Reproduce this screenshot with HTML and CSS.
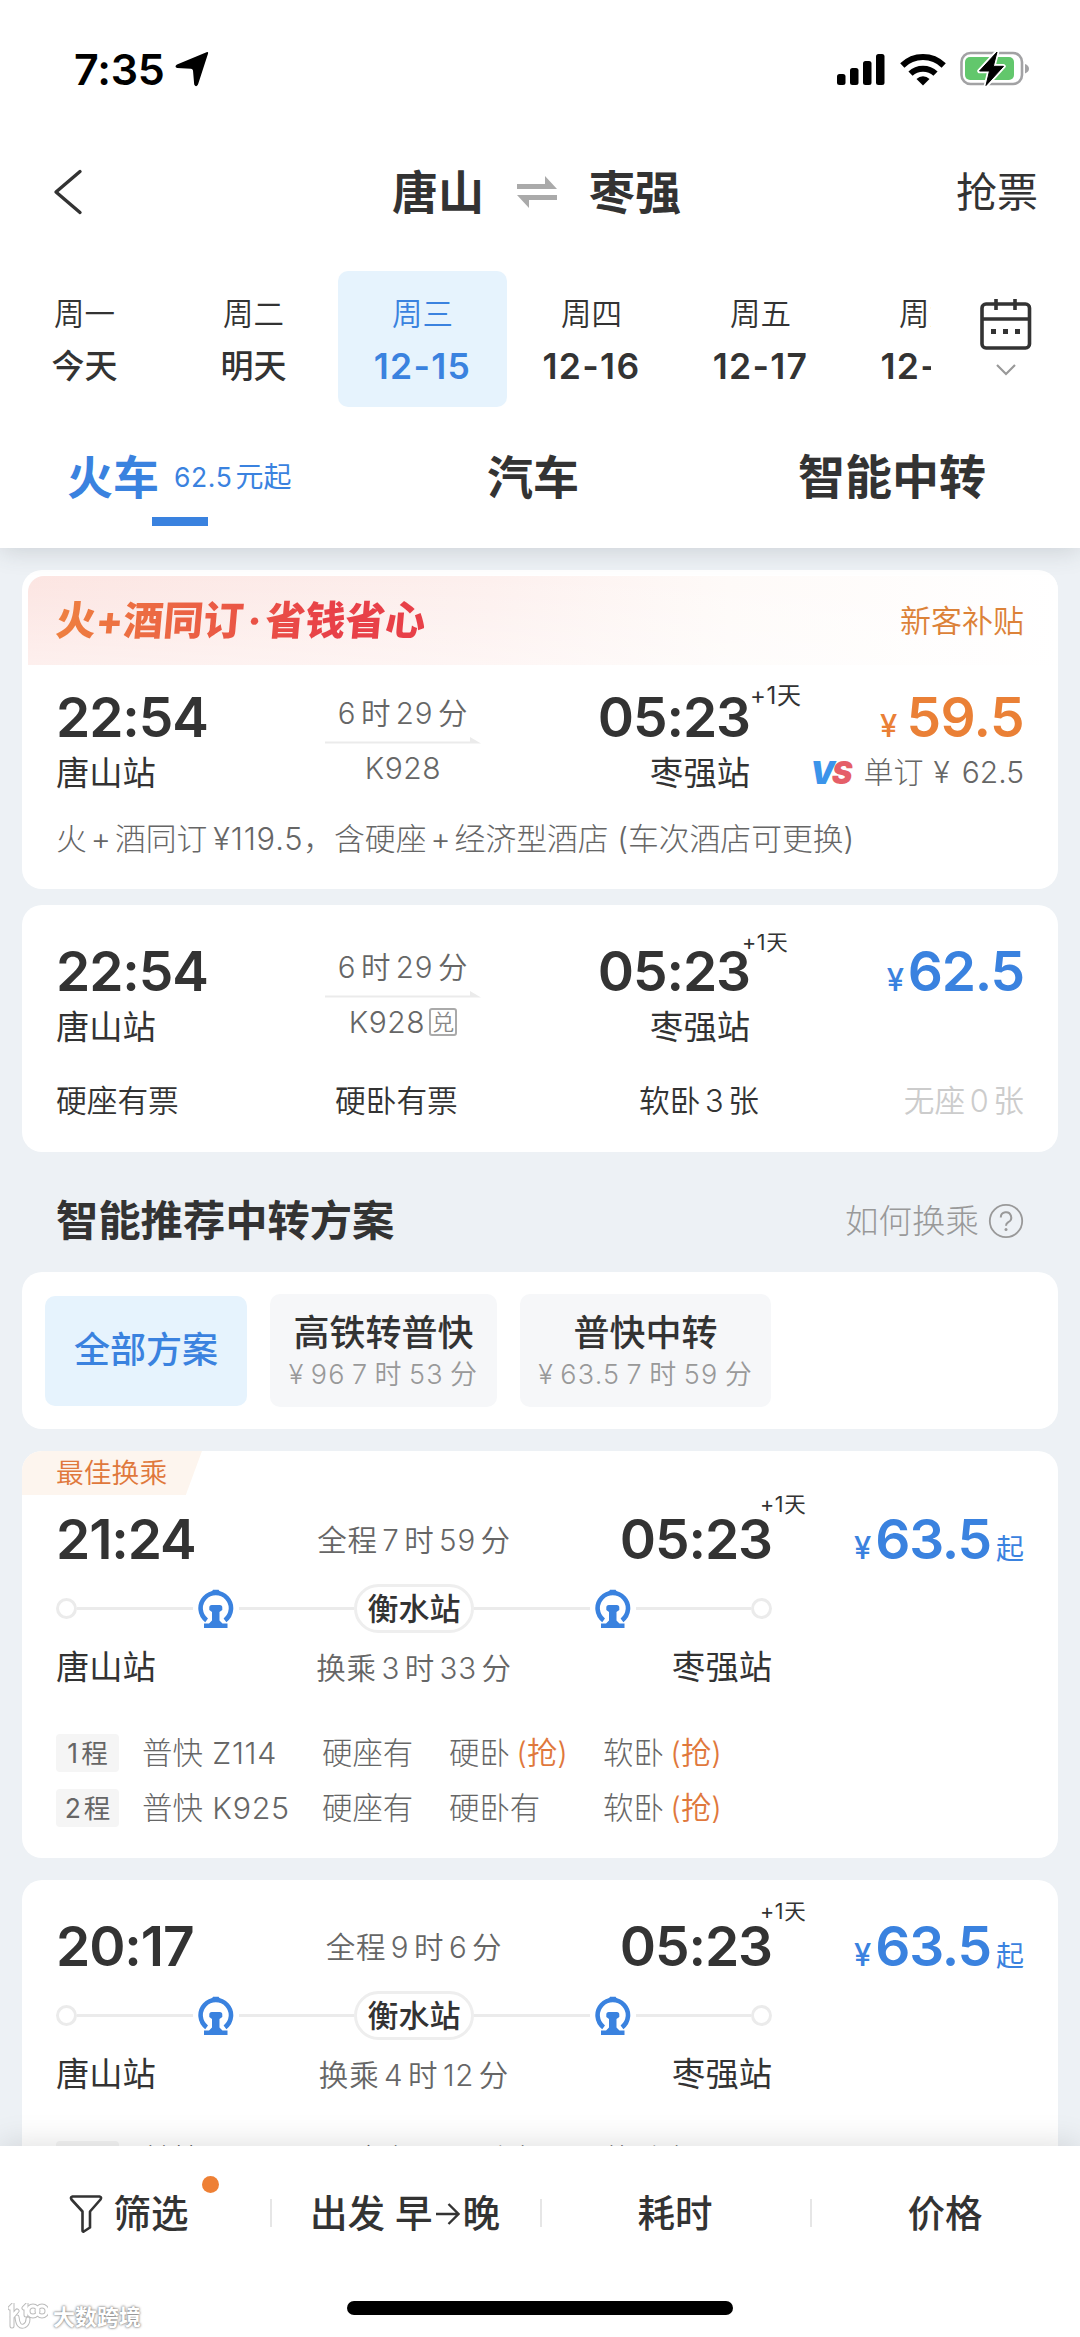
FILE: index.html
```html
<!DOCTYPE html>
<html lang="zh-CN">
<head>
<meta charset="utf-8">
<title>唐山 ⇌ 枣强</title>
<link rel="stylesheet" href="styles.css">
</head>
<body>
<svg class="defs" width="0" height="0" aria-hidden="true">
  <symbol id="rail" viewBox="0 0 36 40">
    <path d="M8.600 31.300A15.200 15.200 0 1 1 27 31.300" fill="none" stroke="#3a82df" stroke-width="4.600"/>
    <path d="M13 3.800L15 0.800h5.600l2 3z" fill="#3a82df"/>
    <path d="M11.300 18.500q0-2.500 2.500-2.500h8q2.500 0 2.500 2.500v2.500l-2.800 2v8.500l3 3H29.500V39H6v-4.500h5l3-3V23l-2.700-2z" fill="#3a82df"/>
  </symbol>
</svg>
<div class="screen">
  <header class="top">
    <div class="status">
      <span class="clock">7:35</span>
      <svg class="loc" width="34" height="36" viewBox="0 0 34 36"><path d="M31.500 1.200Q33.800.5 32.900 3L23 33.500Q21 37 19.200 33.500L18 19.500Q17.500 18 16 17.800L2 17Q-1 15.500 2 13.500z"/></svg>
      <svg class="bars" width="48" height="33" viewBox="0 0 48 33"><rect x="0" y="21" width="8.500" height="11" rx="2.500"/><rect x="13" y="15" width="8.500" height="17" rx="2.500"/><rect x="26" y="8" width="8.500" height="24" rx="2.500"/><rect x="39" y="1" width="8.500" height="31" rx="2.500"/></svg>
      <svg class="wifi" width="46" height="34" viewBox="0 0 46 34"><g fill="none" stroke="#000" stroke-width="6"><path d="M2.300 13.500A29.500 29.500 0 0 1 43.700 13.500"/><path d="M10.500 21.700A18 18 0 0 1 35.500 21.700"/></g><path d="M23 33.500L16.500 27a9.300 9.300 0 0 1 13 0z"/></svg>
      <svg class="batt" width="70" height="36" viewBox="0 0 70 36"><rect x="1.500" y="2" width="60.500" height="31" rx="9" fill="#fff" stroke="#a2a2a4" stroke-width="2.600"/><rect x="5" y="6" width="49" height="23" rx="5" fill="#62c76c"/><path d="M65 13q4 1.500 4 4.700t-4 4.700z" fill="#a2a2a4"/><path d="M37 1L19.500 20h10L26 34.500 43.500 15.300H33.300z" stroke="#fff" stroke-width="4.500" stroke-linejoin="round"/><path d="M37 1L19.500 20h10L26 34.500 43.500 15.300H33.300z" stroke="#000" stroke-linejoin="round"/></svg>
    </div>
    <div class="nav">
      <svg class="back" width="30" height="46" viewBox="0 0 30 46"><path d="M27 2.500L3 23 27 43.500" fill="none" stroke="#333" stroke-width="3.400" stroke-linecap="round" stroke-linejoin="round"/></svg>
      <h1 class="route"><span>唐山</span><svg width="40" height="34" viewBox="0 0 40 34"><path d="M0 9H28V1L40 14H0zM40 20H0L12 33V25H40z" fill="#aaa"/></svg><span>枣强</span></h1>
      <a class="grab">抢票</a>
    </div>
    <div class="dates">
      <div class="days">
        <div class="day"><span>周一</span><b>今天</b></div>
        <div class="day"><span>周二</span><b>明天</b></div>
        <div class="day on"><span>周三</span><b class="num">12-15</b></div>
        <div class="day"><span>周四</span><b class="num">12-16</b></div>
        <div class="day"><span>周五</span><b class="num">12-17</b></div>
        <div class="day"><span>周六</span><b class="num">12-18</b></div>
      </div>
      <div class="cal">
        <svg width="52" height="52" viewBox="0 0 52 52"><g fill="none" stroke="#333" stroke-width="3.600"><rect x="2" y="5" width="47.500" height="44" rx="4"/><path d="M2 20H50M16 0V11M35 0V11" /></g><path d="M11 30h5v5h-5zM23 30h5v5h-5zM35 30h5v5h-5z" fill="#333"/></svg>
        <svg class="down" width="20" height="12" viewBox="0 0 20 12"><path d="M1 1L10 10 19 1" fill="none" stroke="#999" stroke-width="2.200"/></svg>
      </div>
    </div>
    <div class="tabs">
      <div class="tab on">火车<small>62.5<i>元起</i></small></div>
      <div class="tab bus">汽车</div>
      <div class="tab smart">智能中转</div>
    </div>
  </header>

  <main class="list">
    <section class="card combo">
      <div class="banner"><strong>火+酒同订<i>·</i>省钱省心</strong><span>新客补贴</span></div>
      <div class="trip">
        <div class="end"><b class="time">22:54</b><span class="stn">唐山站</span></div>
        <div class="mid"><span class="dur">6 时 29 分</span><svg width="156" height="8" viewBox="0 0 156 8"><path d="M0 5.500H145V1L156 7.500H0z" fill="#ebebeb"/></svg><span class="code">K928</span></div>
        <div class="end right"><b class="time">05:23<sup class="big">+1天</sup></b><span class="stn">枣强站</span></div>
        <div class="cost"><span class="price orange"><em>¥</em>59.5</span><span class="vs"><i class="v">V</i><i class="s">S</i>单订<u>¥</u>62.5</span></div>
      </div>
      <p class="desc">火<i>+</i>酒同订<u>¥119.5</u>，含硬座<i>+</i>经济型酒店 (车次酒店可更换)</p>
    </section>

    <section class="card direct">
      <div class="trip">
        <div class="end"><b class="time">22:54</b><span class="stn">唐山站</span></div>
        <div class="mid"><span class="dur">6 时 29 分</span><svg width="156" height="8" viewBox="0 0 156 8"><path d="M0 5.500H145V1L156 7.500H0z" fill="#ebebeb"/></svg><span class="code">K928<i class="dui">兑</i></span></div>
        <div class="end right"><b class="time">05:23<sup class="mini">+1天</sup></b><span class="stn">枣强站</span></div>
        <div class="cost"><span class="price"><em>¥</em>62.5</span></div>
      </div>
      <div class="seats"><span>硬座有票</span><span>硬卧有票</span><span>软卧 3 张</span><span class="none">无座 0 张</span></div>
    </section>

    <div class="head"><h2>智能推荐中转方案</h2><span>如何换乘</span><svg width="36" height="36" viewBox="0 0 36 36"><circle cx="18" cy="18" r="16.200" fill="none" stroke="#999" stroke-width="1.800"/><path d="M12.800 14.500a5.200 5.200 0 1 1 7.500 4.600c-1.700 1-2.300 1.700-2.300 3.700" fill="none" stroke="#999" stroke-width="2"/><circle cx="18" cy="26.500" r="1.500" fill="#999"/></svg></div>

    <section class="card plans">
      <div class="chip on">全部方案</div>
      <div class="chip c2"><b>高铁转普快</b><span>¥ 96 7 时 53 分</span></div>
      <div class="chip c3"><b>普快中转</b><span>¥ 63.5 7 时 59 分</span></div>
    </section>

    <section class="card change best">
      <div class="flag">最佳换乘</div>
      <div class="row"><b class="time">21:24</b><span class="dur">全程 7 时 59 分</span><b class="time">05:23<sup>+1天</sup></b><span class="price"><em>¥</em>63.5<small>起</small></span></div>
      <div class="track"><i></i><hr><svg width="36" height="40"><use href="#rail"/></svg><hr><span>衡水站</span><hr><svg width="36" height="40"><use href="#rail"/></svg><hr><i></i></div>
      <div class="row names"><span class="stn">唐山站</span><span class="dur">换乘 3 时 33 分</span><span class="stn">枣强站</span></div>
      <div class="legs">
        <div class="leg"><em><s>1</s>程</em><span>普快 <u>Z114</u></span><span>硬座有</span><span>硬卧 <q>(抢)</q></span><span>软卧 <q>(抢)</q></span></div>
        <div class="leg"><em><s>2</s>程</em><span>普快 <u>K925</u></span><span>硬座有</span><span>硬卧有</span><span>软卧 <q>(抢)</q></span></div>
      </div>
    </section>

    <section class="card change">
      <div class="row"><b class="time">20:17</b><span class="dur">全程 9 时 6 分</span><b class="time">05:23<sup>+1天</sup></b><span class="price"><em>¥</em>63.5<small>起</small></span></div>
      <div class="track"><i></i><hr><svg width="36" height="40"><use href="#rail"/></svg><hr><span>衡水站</span><hr><svg width="36" height="40"><use href="#rail"/></svg><hr><i></i></div>
      <div class="row names"><span class="stn">唐山站</span><span class="dur">换乘 4 时 12 分</span><span class="stn">枣强站</span></div>
      <div class="legs">
        <div class="leg"><em></em><span>普快</span><span>硬座有</span><span>硬卧有</span><span>软卧有</span></div>
      </div>
    </section>
  </main>

  <footer class="bar">
    <div class="sorts">
      <div class="sort filter"><svg width="34" height="40" viewBox="0 0 34 40"><path d="M3.500 2.500H30.500Q33 3 31.500 5.500L21 17.500V33.500L14.800 37.500Q13.500 38 13.500 36.500V17.500L2.500 5.500Q1 3 3.500 2.500z" fill="none" stroke="#333" stroke-width="2.600" stroke-linejoin="round"/></svg>筛选<i class="dot"></i></div>
      <div class="sort">出发 早<svg class="arr" width="24" height="24" viewBox="0 0 24 24"><path d="M0 12H22M12.500 2L22.500 12 12.500 22" fill="none" stroke="#333" stroke-width="2.400"/></svg>晚</div>
      <div class="sort">耗时</div>
      <div class="sort">价格</div>
    </div>
    <div class="home"></div>
    <div class="mark"><svg width="40" height="28" viewBox="0 0 40 28"><g fill="none" stroke-linecap="round"><g stroke="#bbb" stroke-width="5"><path d="M2 5L4 3V23M4 14L9 8M9 14Q10 25 16 23 20 21 20 16"/><path d="M18 12V3L16 5"/><circle cx="25" cy="8" r="5"/><circle cx="34" cy="8" r="5"/></g><g stroke="#fff" stroke-width="3"><path d="M2 5L4 3V23M4 14L9 8M9 14Q10 25 16 23 20 21 20 16"/><path d="M18 12V3L16 5"/><circle cx="25" cy="8" r="5"/><circle cx="34" cy="8" r="5"/></g></g></svg>大数跨境</div>
  </footer>
</div>
</body>
</html>
```
FILE: styles.css
```css
* { box-sizing: border-box; margin: 0; padding: 0; }
body { width: 1080px; height: 2337px; overflow: hidden; background: #fff; color: #333; font-family: Inter, "Noto Sans CJK SC", sans-serif; }
i, em { font-style: normal; }
u, s { text-decoration: none; }
q::before, q::after { content: none; }
svg { display: block; flex: none; }
.defs { position: absolute; }
.screen { display: flex; flex-direction: column; height: 2337px; overflow: hidden; }

.top { position: relative; z-index: 2; height: 548px; background: #fff; box-shadow: 0 2px 24px rgba(60, 70, 80, .2); }
.status { display: flex; align-items: center; height: 138px; padding: 0 50px 0 74px; color: #000; }
.clock { width: 102px; font-size: 43px; font-weight: 600; letter-spacing: -.2px; line-height: 50px; }
.bars { margin-left: 628px; }
.wifi { margin-left: 15px; }
.batt { margin-left: 14px; }

.nav { display: grid; grid-template-columns: 392px 289px 1fr; align-items: center; height: 106px; padding-top: 2px; }
.back { margin-left: 53px; }
.route { display: flex; align-items: center; justify-content: space-between; font-size: 46px; font-weight: 600; line-height: 60px; }
.grab { padding-right: 42px; font-size: 41px; line-height: 60px; text-align: right; }

.dates { display: flex; height: 178px; padding-top: 10px; }
.days { position: relative; display: flex; width: 931px; height: 168px; padding-top: 17px; overflow: hidden; }
.days::after { content: ""; position: absolute; right: 0; top: 0; width: 75px; height: 168px; background: radial-gradient(closest-side at 100% 50%, rgba(0,0,0,.11), rgba(0,0,0,0)); }
.day { flex: 0 0 169px; display: flex; flex-direction: column; align-items: center; height: 136px; padding-top: 20px; border-radius: 10px; }
.day span { font-size: 30.500px; font-weight: 350; line-height: 46px; }
.day b { margin-top: 6px; font-size: 33px; font-weight: 500; line-height: 46px; }
.day .num { padding-top: 1px; font-size: 35.500px; font-weight: 600; letter-spacing: 1.300px; }
.day.on { background: #e6f3fd; color: #3a82df; }
.cal { display: flex; flex-direction: column; align-items: center; width: 149px; padding: 45px 0 0; }
.down { margin-top: 13px; }

.tabs { display: flex; position: relative; padding-top: 25px; font-size: 46px; font-weight: 600; line-height: 60px; }
.tab { position: relative; }
.tab.on { display: flex; width: 420px; padding-left: 67px; color: #3a82df; }
.tab.on small { display: flex; margin-left: 15px; font-size: 26.500px; font-weight: 400; letter-spacing: .6px; }
.tab.on small i { margin-left: 3px; font-size: 28px; letter-spacing: 0; }
.tab.on::after { content: ""; position: absolute; left: 152px; top: 70px; width: 56px; height: 9px; background: #3a82df; }
.bus { width: 311px; padding-left: 67px; }
.smart { width: 349px; padding-left: 67px; font-size: 47px; }

.list { flex: 1; min-height: 0; overflow: hidden; padding: 22px 22px 0; background: #edf1f5; }
.card { width: 1036px; border-radius: 20px; background: #fff; overflow: hidden; }
.combo { height: 319px; padding-top: 6px; }
.banner { display: flex; align-items: center; justify-content: space-between; height: 89px; margin-left: 6px; padding: 0 34px 0 28px; border-radius: 16px 0 0 0; background: linear-gradient(to bottom, transparent, rgba(255,255,255,.4)), linear-gradient(90deg, #fce5e2, #fdf0ee 45%, #fefaf8 68%, #fff); }
.banner strong { display: flex; transform: skewX(-5deg); font-size: 40px; font-weight: 800; line-height: 60px; background: linear-gradient(90deg, #ee8040, #e84048 75%); background-clip: text; color: transparent; }
.banner strong i { width: 22px; text-align: center; }
.banner span { font-size: 31px; font-weight: 350; line-height: 60px; color: #dc8238; }

.trip { display: grid; grid-template-columns: 269px 156px 269px 274px; height: 110px; margin: 25px 34px 0; }
.end { display: flex; flex-direction: column; }
.right { align-items: flex-end; }
.time { position: relative; font-size: 55px; font-weight: 600; letter-spacing: -1.100px; line-height: 55px; white-space: nowrap; }
.time sup { position: absolute; left: calc(100% - 12px); top: -23px; font-size: 21.500px; font-weight: 400; letter-spacing: .6px; line-height: 30px; }
.time .mini { left: calc(100% - 8px); top: -17px; }
.time .big { left: 100%; top: -9px; font-size: 24px; letter-spacing: .7px; }
.stn { font-size: 33.300px; line-height: 57px; }
.mid { display: flex; flex-direction: column; align-items: center; color: #666; }
.dur { font-size: 29.500px; font-weight: 350; line-height: 46px; letter-spacing: .8px; word-spacing: -4.500px; color: #666; white-space: nowrap; }
.code { display: flex; align-items: center; margin-top: 1px; font-size: 30px; font-weight: 350; letter-spacing: .6px; line-height: 46px; }
.dui { width: 28px; height: 28px; margin-left: 4px; border: 2px solid #aaa; border-radius: 3px; font-size: 22px; letter-spacing: 0; line-height: 24px; text-align: center; color: #888; }
.cost { display: flex; flex-direction: column; align-items: flex-end; }
.price { display: flex; align-items: baseline; height: 55px; font-size: 55px; font-weight: 600; letter-spacing: -1.200px; line-height: 55px; color: #3a82df; }
.price em { margin-right: 5px; font-size: 31px; font-weight: 500; line-height: 1; }
.price small { margin-left: 5px; font-size: 28px; font-weight: 400; letter-spacing: 0; line-height: 1; }
.orange { color: #ea8036; letter-spacing: -.6px; }
.orange em { margin-right: 10px; }
.vs { display: flex; align-items: center; font-size: 30px; font-weight: 300; line-height: 55px; color: #666; }
.vs u { margin: 0 12px 0 10px; }
.vs .v, .vs .s { font-size: 31px; font-weight: 900; font-style: italic; line-height: 32px; }
.vs .v { color: #3b94ea; }
.vs .s { margin: 0 11px 0 -3px; color: #e55f68; }
.desc { margin: 0 34px; font-size: 30.800px; font-weight: 300; line-height: 78px; color: #666; white-space: nowrap; }
.desc i { margin: 0 4px; }
.desc u { margin-left: 6px; letter-spacing: .8px; }

.direct { height: 247px; margin-top: 16px; padding-top: 39px; }
.direct .trip { margin-top: 0; }
.seats { display: grid; grid-template-columns: 279px 304px 1fr auto; margin: 17px 34px 0; font-size: 30.700px; font-weight: 350; line-height: 60px; word-spacing: -4px; }
.none { color: #ccc; }

.head { display: flex; align-items: center; height: 120px; padding: 18px 34px 0; }
.head h2 { flex: 1; font-size: 42.300px; font-weight: 600; line-height: 60px; }
.head span { margin-right: 9px; font-size: 33.500px; font-weight: 300; line-height: 60px; color: #999; }

.plans { display: flex; gap: 23px; align-items: center; height: 157px; padding-left: 23px; }
.chip { display: flex; flex-direction: column; align-items: center; justify-content: center; height: 113px; border-radius: 10px; background: #f6f7f9; font-size: 36px; font-weight: 500; line-height: 50px; white-space: nowrap; }
.chip.on { width: 202px; height: 110px; padding-bottom: 2px; background: #e6f3fd; color: #3a82df; }
.c2 { width: 227px; }
.c3 { width: 251px; }
.chip b { padding-top: 1px; font-weight: 500; line-height: 46px; }
.chip span { padding-top: 1px; font-size: 27px; font-weight: 350; line-height: 36px; letter-spacing: 1.200px; word-spacing: -2.500px; color: #999; }

.change { height: 407px; margin-top: 22px; padding-top: 38px; }
.best { padding-top: 0; }
.flag { width: 180px; height: 44px; margin-bottom: 16px; padding-left: 34px; background: #fdf5ee; clip-path: polygon(0 0, 100% 0, 91% 100%, 0 100%); font-size: 27.800px; font-weight: 350; line-height: 44px; color: #e0783c; }
.row { display: grid; grid-template-columns: 238px 240px 238px 1fr; grid-template-rows: 100%; align-items: center; height: 57px; margin: 0 34px; }
.row > :nth-child(2) { justify-self: center; }
.row > :nth-child(3), .row > :nth-child(4) { justify-self: end; }
.track { display: flex; align-items: center; width: 716px; height: 49px; margin: 16px 34px 0; }
.track i { width: 21px; height: 21px; border: 3.500px solid #ebebeb; border-radius: 50%; }
.track hr { flex: 1; height: 2.500px; border: 0; background: #ebebeb; }
.track svg { margin: 0 5px; }
.track span { width: 120px; height: 49px; border: 3px solid #eee; border-radius: 25px; font-size: 31px; font-weight: 500; line-height: 43px; text-align: center; }
.row.names { height: 41px; margin-top: 14px; }
.names .stn { line-height: 41px; }
.legs { display: grid; gap: 17px; margin: 46px 34px 0; }
.leg { display: grid; grid-template-columns: 86px 180px 127px 154px 1fr; align-items: center; height: 38px; font-size: 30.400px; font-weight: 300; line-height: 36px; color: #666; white-space: nowrap; }
.leg em { display: flex; justify-content: center; width: 63px; height: 38px; border-radius: 4px; background: #f5f5f5; font-size: 26.500px; font-weight: 400; line-height: 38px; }
.leg s { margin-right: 3px; }
.leg u { margin-left: 1px; letter-spacing: .7px; }
.leg q { margin-left: -2px; color: #e0783c; font-weight: 350; }

.bar { position: relative; z-index: 2; height: 191px; background: #fff; box-shadow: 0 -2px 30px rgba(0, 0, 0, .13); }
.sorts { display: grid; grid-template-columns: repeat(4, 270px); height: 135px; }
.sort { position: relative; display: flex; align-items: center; justify-content: center; padding-top: 1px; font-size: 37.500px; font-weight: 500; line-height: 134px; white-space: pre; }
.sort + .sort::before { content: ""; position: absolute; left: 0; top: 53px; width: 2px; height: 28px; background: #e6e6e6; }
.filter { padding-right: 13px; }
.filter svg { margin-right: 11px; }
.dot { position: absolute; left: 202px; top: 30px; width: 17px; height: 17px; border-radius: 50%; background: #ee8035; }
.arr { margin: 0 3px; }
.home { width: 386px; height: 14px; margin: 20px auto 0; border-radius: 7px; background: #000; }
.mark { position: absolute; left: 8px; bottom: 5px; display: flex; align-items: center; gap: 5px; font-size: 22px; font-weight: 700; line-height: 30px; color: #fff; text-shadow: 0 0 2px #777, 0 0 3px #999; }
```
